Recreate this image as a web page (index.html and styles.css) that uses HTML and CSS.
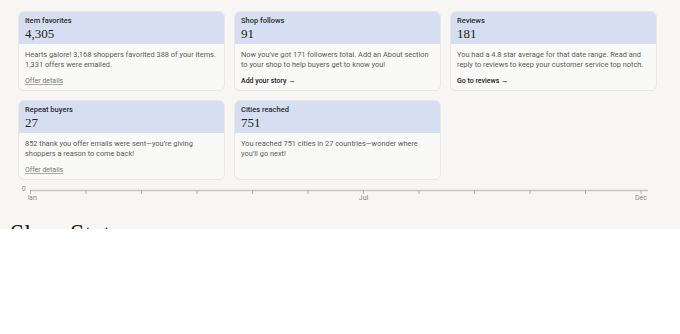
FILE: index.html
```html
<!DOCTYPE html>
<html lang="en">
<head>
    <meta charset="UTF-8">
    <meta name="viewport" content="width=device-width, initial-scale=1.0">
    <title>Shop stats</title>
    <link rel="stylesheet" href="styles.css">
</head>
<body>
    <div class="panel">
        <div class="cards">
            <div class="card">
                <div class="card-head">
                    <div class="card-title">Item favorites</div>
                    <div class="card-num">4,305</div>
                </div>
                <div class="card-body">
                    <p>Hearts galore! 3,168 shoppers favorited 388 of your items. 1,331 offers were emailed.</p>
                    <a href="#" class="muted-link">Offer details</a>
                </div>
            </div>
            <div class="card">
                <div class="card-head">
                    <div class="card-title">Shop follows</div>
                    <div class="card-num">91</div>
                </div>
                <div class="card-body">
                    <p>Now you’ve got 171 followers total. Add an About section to your shop to help buyers get to know you!</p>
                    <a href="#" class="action-link">Add your story <span class="arrow">→</span></a>
                </div>
            </div>
            <div class="card">
                <div class="card-head">
                    <div class="card-title">Reviews</div>
                    <div class="card-num">181</div>
                </div>
                <div class="card-body">
                    <p>You had a 4.8 star average for that date range. Read and reply to reviews to keep your customer service top notch.</p>
                    <a href="#" class="action-link">Go to reviews <span class="arrow">→</span></a>
                </div>
            </div>
            <div class="card">
                <div class="card-head">
                    <div class="card-title">Repeat buyers</div>
                    <div class="card-num">27</div>
                </div>
                <div class="card-body">
                    <p>852 thank you offer emails were sent—you’re giving shoppers a reason to come back!</p>
                    <a href="#" class="muted-link">Offer details</a>
                </div>
            </div>
            <div class="card">
                <div class="card-head">
                    <div class="card-title">Cities reached</div>
                    <div class="card-num">751</div>
                </div>
                <div class="card-body">
                    <p>You reached 751 cities in 27 countries—wonder where you’ll go next!</p>
                </div>
            </div>
        </div>

        <div class="chart">
            <span class="zero">0</span>
            <svg class="axis" width="622" height="14" viewBox="-2 0 622 14">
                <line x1="0" y1="1.5" x2="618" y2="1.5" stroke="#c8c6c3" stroke-width="1.5"/>
                <g stroke="#b5b3b0" stroke-width="1">
                    <line x1="0.5" y1="1" x2="0.5" y2="5"/>
                    <line x1="56" y1="1" x2="56" y2="5"/>
                    <line x1="111.5" y1="1" x2="111.5" y2="5"/>
                    <line x1="167" y1="1" x2="167" y2="5"/>
                    <line x1="222.5" y1="1" x2="222.5" y2="5"/>
                    <line x1="278" y1="1" x2="278" y2="5"/>
                    <line x1="333.5" y1="1" x2="333.5" y2="5"/>
                    <line x1="389" y1="1" x2="389" y2="5"/>
                    <line x1="444.5" y1="1" x2="444.5" y2="5"/>
                    <line x1="500" y1="1" x2="500" y2="5"/>
                    <line x1="555.5" y1="1" x2="555.5" y2="5"/>
                    <line x1="611" y1="1" x2="611" y2="5"/>
                </g>
                <g class="tick-label">
                    <text x="1" y="10.5" text-anchor="middle">Jan</text>
                    <text x="333.5" y="10.5" text-anchor="middle">Jul</text>
                    <text x="611" y="10.5" text-anchor="middle">Dec</text>
                </g>
            </svg>
        </div>

        <h2 class="section-title">Shop Stats</h2>
    </div>
</body>
</html>
```

FILE: styles.css
```css
body {
    margin: 0;
    background: #fff;
    font-family: Roboto, "Liberation Sans", sans-serif;
    color: #222;
}

.panel {
    height: 229px;
    overflow: hidden;
    background: #f7f6f4;
    padding: 11px 24px 0 18px;
    box-sizing: border-box;
}

.cards {
    display: grid;
    grid-template-columns: repeat(3, 207px);
    column-gap: 9px;
    row-gap: 9px;
}

.card {
    background: #f9f9f7;
    border: 1px solid #e9e7e4;
    border-radius: 6px;
    overflow: hidden;
    display: flex;
    flex-direction: column;
}

.card-head {
    background: #d6dff1;
    padding: 4px 6px 3px;
    height: 32px;
    box-sizing: border-box;
}

.card-title {
    font-size: 7.5px;
    font-weight: 500;
    line-height: 10px;
    color: #2a2a2a;
}

.card-num {
    font-family: "Liberation Serif", "DejaVu Serif", serif;
    font-size: 13px;
    line-height: 15px;
    color: #222;
}

.card-body {
    padding: 6px 6px 4px;
    flex: 1;
    font-size: 7px;
    line-height: 10px;
}

.card-body p {
    margin: 0 0 6px;
    font-size: 7.4px;
    line-height: 10px;
    color: #5c5c5c;
}

.muted-link,
.action-link {
    display: block;
    width: max-content;
    font-size: 7px;
    line-height: 10px;
}

.muted-link {
    color: #777;
    text-decoration: underline;
    text-decoration-color: #aaa;
}

.action-link {
    font-weight: 500;
    color: #222;
    text-decoration: none;
}

.arrow {
    font-size: 7.5px;
}

.chart {
    display: flex;
    align-items: flex-start;
    margin-top: 9px;
    padding-left: 4px;
}

.zero {
    font-size: 6.5px;
    color: #888;
    width: 6px;
    line-height: 6px;
    margin-top: -3px;
}

.axis {
    display: block;
}

.tick-label {
    font-family: Roboto, "Liberation Sans", sans-serif;
    font-size: 7px;
    fill: #888;
}

.section-title {
    font-family: "Liberation Serif", "DejaVu Serif", serif;
    font-weight: 400;
    font-size: 26px;
    line-height: 30px;
    margin: 16px 0 0 -8px;
    color: #222;
}
```
